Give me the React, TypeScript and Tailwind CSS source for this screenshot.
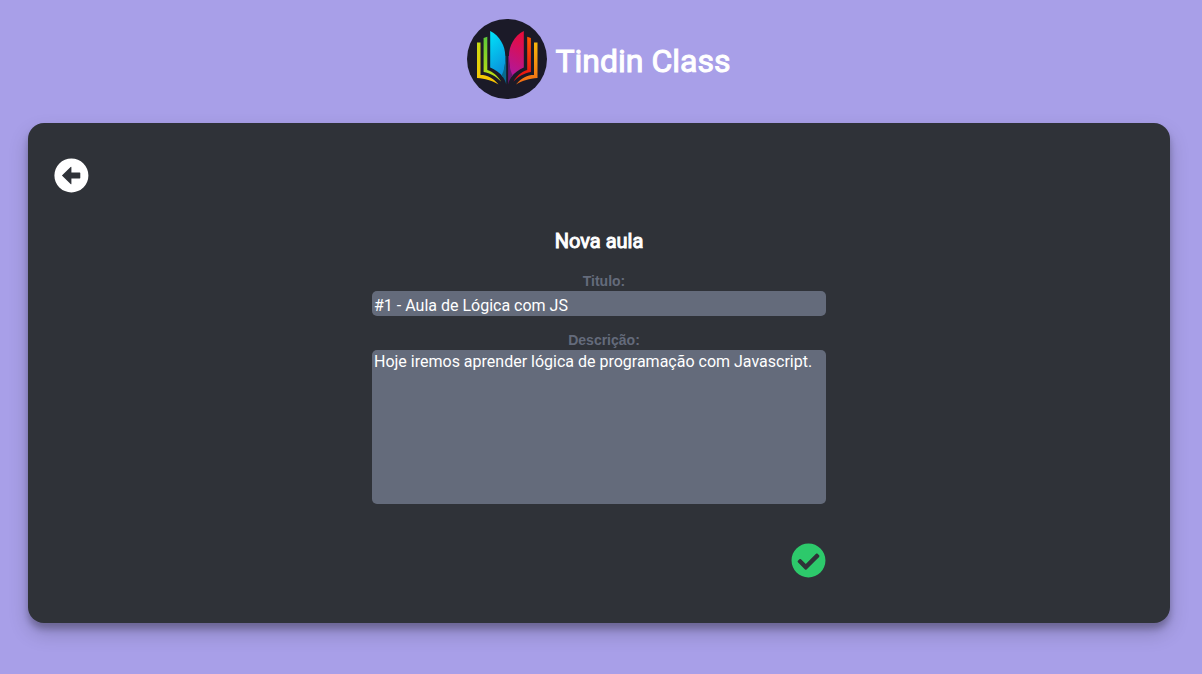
import { FaCheckCircle } from "react-icons/fa";

function BackIcon() {
  return (
    <svg viewBox="0 0 35 35" className="size-[35px]" fill="currentColor" fillRule="evenodd" aria-hidden="true">
      <path d="M17.400 .4a17 17 0 1 1 0 34a17 17 0 1 1 0-34zM7.900 17.500L16.600 8.900q.8-.7 .8 .4v5.300h8.300q.6 0 .6 .6v4.600q0 .6-.6 .6h-8.300v5.300q0 1.100-.8 .4z" />
    </svg>
  );
}

function Logo() {
  return (
    <svg viewBox="0 0 80 80" className="size-20" aria-hidden="true">
      <defs>
        <linearGradient id="cyan" x1="0" y1="0" x2="0.3" y2="1">
          <stop offset="0" stopColor="#00e5fa" />
          <stop offset="1" stopColor="#0a94dc" />
        </linearGradient>
        <linearGradient id="pink" x1="0.6" y1="0" x2="0.4" y2="1">
          <stop offset="0" stopColor="#e80c3c" />
          <stop offset="1" stopColor="#b0189c" />
        </linearGradient>
        <linearGradient id="green" x1="0" y1="0" x2="0" y2="1">
          <stop offset="0" stopColor="#5cc83a" />
          <stop offset="1" stopColor="#c4e010" />
        </linearGradient>
        <linearGradient id="yellow" x1="0" y1="0" x2="0" y2="1">
          <stop offset="0" stopColor="#c8dc14" />
          <stop offset="1" stopColor="#ffc400" />
        </linearGradient>
        <linearGradient id="red" x1="0" y1="0" x2="0" y2="1">
          <stop offset="0" stopColor="#ff5a00" />
          <stop offset="1" stopColor="#e60a14" />
        </linearGradient>
        <linearGradient id="orange" x1="0" y1="0" x2="0" y2="1">
          <stop offset="0" stopColor="#f5b80c" />
          <stop offset="1" stopColor="#f26a14" />
        </linearGradient>
      </defs>
      <circle cx="40" cy="40" r="40" fill="#1b1a28" />
      <path d="M10 23.500h3.500v32.500c7 0 12 2.500 18 9.500-7-4-13-6-21.500-6.500z" fill="url(#yellow)" />
      <path d="M16.600 19l3.700-1.300V51c6 2 10 5.500 13.700 11.500-5-5-10.500-8.500-17.400-9.500z" fill="url(#green)" />
      <path d="M23.200 12C33 17 38.300 27 38.300 37c0 8-.8 14-2.300 21C33 54 28 50.500 23.200 48.500z" fill="url(#cyan)" />
      <path d="M38.300 37h.9V65.500C38.500 62 37 59 34.500 56.500 37.500 51 38.300 45 38.300 37z" fill="#08698f" />
      <path d="M70.500 23.500h-3.500v32.500c-7 0-12 2.500-18 9.500 7-4 13-6 21.500-6.500z" fill="url(#orange)" />
      <path d="M63.900 19l-3.700-1.300V51c-6 2-10 5.500-13.700 11.500 5-5 10.500-8.500 17.400-9.500z" fill="url(#red)" />
      <path d="M56.800 12C47 17 42 27 42 37c0 8 .8 14 2.300 21 3-4 7.700-7.500 12.500-9.500z" fill="url(#pink)" />
      <path d="M42 37h-.9V65.500C41.800 62 43.300 59 45.800 56.500 42.800 51 42 45 42 37z" fill="#6c1670" />
    </svg>
  );
}

export default function App() {
  return (
    <div className="min-h-screen bg-[#a89fe8] pt-[19px] pr-8 pb-12 pl-7 font-['Roboto',sans-serif] text-white">
      <header className="mb-6 flex items-center justify-center gap-2">
        <Logo />
        <h1 className="pt-1 text-[32px] leading-10 font-normal [-webkit-text-stroke:1px_white]">Tindin Class</h1>
      </header>

      <main className="rounded-2xl bg-[#2f3238] px-[26px] pt-[35px] pb-[45px] shadow-[0_10px_20px_rgba(0,0,0,0.19),0_6px_6px_rgba(0,0,0,0.23)]">
        <button type="button" aria-label="Voltar" className="block cursor-pointer">
          <BackIcon />
        </button>

        <form className="mx-auto mt-9 flex w-full max-w-[454px] flex-col" onSubmit={(e) => e.preventDefault()}>
          <h2 className="mb-5 text-center text-xl leading-6 font-normal [-webkit-text-stroke:1px_white]">Nova aula</h2>

          <label htmlFor="titulo" className="pb-0.5 pl-2.5 text-center font-['Liberation_Sans',sans-serif] text-sm leading-4 font-bold text-[#646b7b]">
            Titulo:
          </label>
          <input
            id="titulo"
            type="text"
            defaultValue="#1 - Aula de Lógica com JS"
            className="mb-4 h-[25px] rounded-[5px] bg-[#646b7b] px-0.5 pt-1 text-base leading-5 outline-none"
          />

          <label htmlFor="descricao" className="pb-0.5 pl-2.5 text-center font-['Liberation_Sans',sans-serif] text-sm leading-4 font-bold text-[#646b7b]">
            Descrição:
          </label>
          <textarea
            id="descricao"
            defaultValue="Hoje iremos aprender lógica de programação com Javascript."
            className="mb-[39px] h-[154px] resize-none rounded-[5px] bg-[#646b7b] px-0.5 pt-0.5 text-base leading-5 outline-none"
          />

          <button type="submit" aria-label="Salvar" className="cursor-pointer self-end text-[#2dc96b]">
            <FaCheckCircle size={35} />
          </button>
        </form>
      </main>
    </div>
  );
}
